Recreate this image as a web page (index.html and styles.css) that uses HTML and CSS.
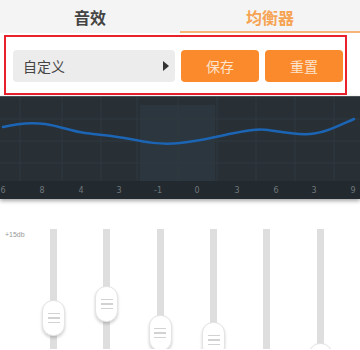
FILE: index.html
```html
<html>
	<head>
		<link rel="stylesheet" href="styles.css">
	</head>
	<body>
		<div class="tabs">
			<div class="tab">音效</div>
			<div class="tab active">均衡器</div>
		</div>
		<div class="preset-box">
			<div class="preset-select">
				<span>自定义</span>
				<span class="caret"></span>
			</div>
			<button class="btn">保存</button>
			<button class="btn">重置</button>
		</div>
		<div class="graph">
			<svg width="360" height="102" viewBox="0 0 360 102">
				<rect x="0" y="0" width="360" height="102" fill="#283036"/>
				<rect x="140" y="8" width="75" height="76" fill="#2b363e"/>
				<g stroke="#2f383f" stroke-width="1">
					<line x1="20" y1="0" x2="20" y2="84"/>
					<line x1="62" y1="0" x2="62" y2="84"/>
					<line x1="101" y1="0" x2="101" y2="84"/>
					<line x1="137" y1="0" x2="137" y2="84"/>
					<line x1="178" y1="0" x2="178" y2="84"/>
					<line x1="217" y1="0" x2="217" y2="84"/>
					<line x1="256" y1="0" x2="256" y2="84"/>
					<line x1="295" y1="0" x2="295" y2="84"/>
					<line x1="334" y1="0" x2="334" y2="84"/>
					<line x1="0" y1="22" x2="360" y2="22"/>
					<line x1="0" y1="44" x2="360" y2="44"/>
					<line x1="0" y1="66" x2="360" y2="66"/>
				</g>
				<rect x="0" y="84" width="360" height="18" fill="#232a2f"/>
				<path d="M3 30 C 15 27, 30 25, 45 27 S 70 34, 85 36 S 115 39, 130 42 S 160 48, 180 46 S 210 41, 225 38 S 255 31, 268 33 S 295 38, 310 37 S 340 28, 354 22" fill="none" stroke="#1c64b4" stroke-width="2.5" stroke-linecap="round"/>
				<g class="axis" fill="#6f777c" text-anchor="middle">
					<text x="3" y="96">6</text>
					<text x="42" y="96">8</text>
					<text x="81" y="96">4</text>
					<text x="119" y="96">3</text>
					<text x="158" y="96">-1</text>
					<text x="197" y="96">0</text>
					<text x="237" y="96">3</text>
					<text x="276" y="96">6</text>
					<text x="314" y="96">3</text>
					<text x="353" y="96">9</text>
				</g>
			</svg>
		</div>
		<div class="eq">
			<div class="db-label">+15db</div>
			<div class="bands">
				<div class="band"><div class="track"><div class="thumb" style="top: 71px"><i></i><i></i><i></i></div></div></div>
				<div class="band"><div class="track"><div class="thumb" style="top: 57px"><i></i><i></i><i></i></div></div></div>
				<div class="band"><div class="track"><div class="thumb" style="top: 86px"><i></i><i></i><i></i></div></div></div>
				<div class="band"><div class="track"><div class="thumb" style="top: 93px"><i></i><i></i><i></i></div></div></div>
				<div class="band"><div class="track"><div class="thumb" style="top: 140px"><i></i><i></i><i></i></div></div></div>
				<div class="band"><div class="track"><div class="thumb" style="top: 114px"><i></i><i></i><i></i></div></div></div>
			</div>
		</div>
	</body>
</html>
```

FILE: styles.css
```css
body {
	margin: 0;
	width: 360px;
	height: 350px;
	overflow: hidden;
	background-color: #fff;
	font-family: "Noto Sans CJK SC", "Noto Sans", sans-serif;
}
.tabs {
	display: flex;
	height: 33px;
	background-color: #f4f4f4;
}
.tab {
	flex: 1;
	display: flex;
	align-items: center;
	justify-content: center;
	font-size: 16px;
	font-weight: bold;
	color: #444;
	box-sizing: border-box;
}
.tab.active {
	color: #f6a352;
	border-bottom: 2px solid #f8b57a;
	padding-top: 2px;
}
.preset-box {
	display: flex;
	gap: 6px;
	width: 343px;
	height: 60px;
	box-sizing: border-box;
	margin: 2px 0 0 4px;
	padding: 13px 2px 11px 7px;
	border: 2px solid #e8212d;
}
.preset-select {
	width: 162px;
	height: 32px;
	display: flex;
	align-items: center;
	justify-content: space-between;
	box-sizing: border-box;
	padding: 0 6px 0 10px;
	background-color: #ececec;
	border-radius: 4px;
	font-size: 14px;
	color: #444;
}
.caret {
	width: 0;
	height: 0;
	border-top: 5px solid transparent;
	border-bottom: 5px solid transparent;
	border-left: 6px solid #333;
}
.btn {
	width: 78px;
	height: 32px;
	border: none;
	border-radius: 4px;
	background-color: #fb8a2d;
	color: #fde3cc;
	font-family: "Noto Sans CJK SC", "Noto Sans", sans-serif;
	font-size: 14px;
	padding: 0;
}
.graph {
	margin-top: 1px;
	height: 102px;
	border-top: 1px solid #4a4f53;
	box-shadow: 0 2px 4px rgba(0, 0, 0, 0.35);
}
.graph svg {
	display: block;
}
.axis {
	font-family: "DejaVu Sans", sans-serif;
	font-size: 8px;
}
.eq {
	display: flex;
	height: 150px;
	box-sizing: border-box;
	overflow: hidden;
	padding-top: 30px;
}
.db-label {
	width: 27px;
	padding-left: 5px;
	box-sizing: border-box;
	font-family: "Liberation Sans", sans-serif;
	font-size: 7px;
	color: #999;
	margin-top: 2px;
}
.bands {
	flex: 1;
	display: flex;
	padding-right: 13px;
}
.band {
	flex: 1;
	display: flex;
	justify-content: center;
}
.track {
	position: relative;
	width: 7px;
	height: 200px;
	background-color: #dedede;
}
.thumb {
	position: absolute;
	left: -8px;
	width: 23px;
	height: 36px;
	box-sizing: border-box;
	background-color: #fff;
	border: 1px solid #e4e4e4;
	border-radius: 11px;
	box-shadow: 0 2px 3px rgba(0, 0, 0, 0.18);
	display: flex;
	flex-direction: column;
	align-items: center;
	justify-content: center;
	gap: 3px;
}
.thumb i {
	display: block;
	width: 12px;
	height: 1.5px;
	background-color: #d2d2d2;
}
```
